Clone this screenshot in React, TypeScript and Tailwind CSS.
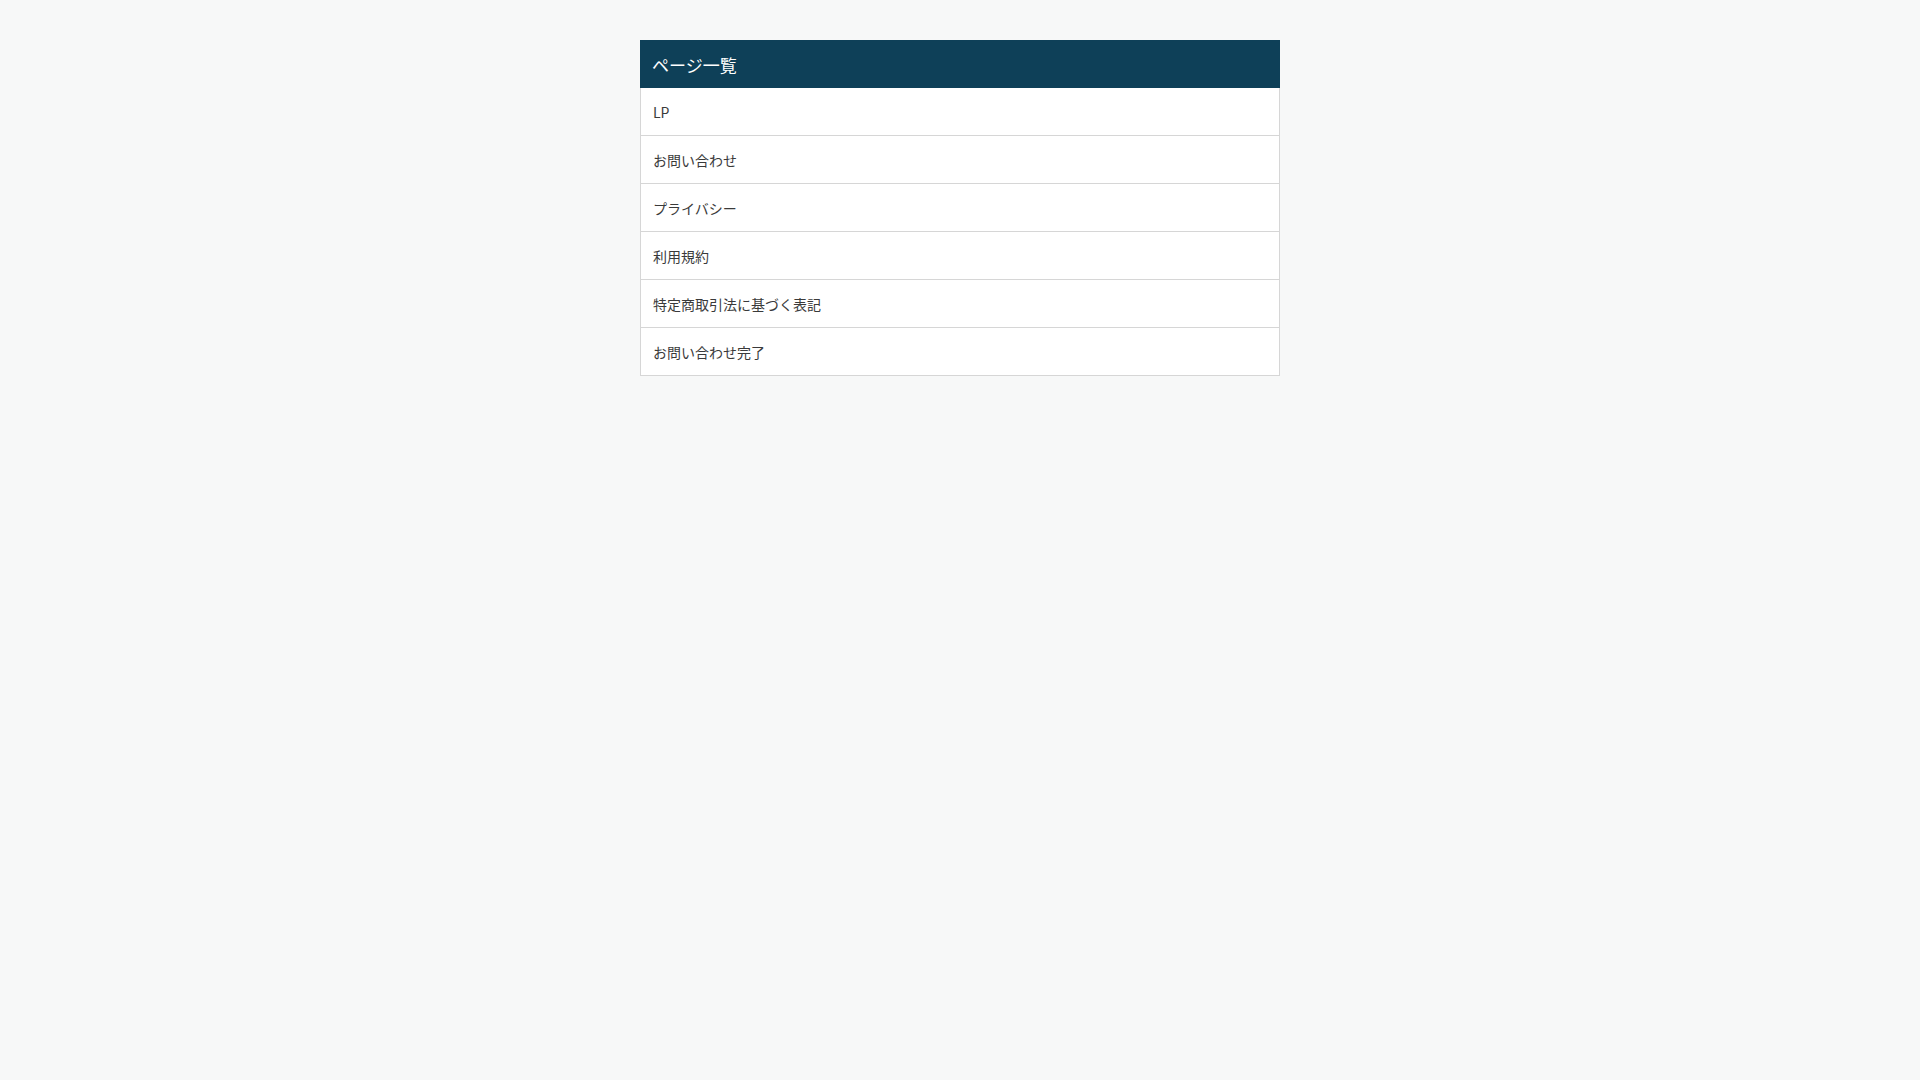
import * as React from 'react'

const pages = ['LP', 'お問い合わせ', 'プライバシー', '利用規約', '特定商取引法に基づく表記', 'お問い合わせ完了']

export default function App() {
  return (
    <div
      className="min-h-screen w-full bg-[#f7f8f8] pt-10"
      style={{ fontFamily: '"Noto Sans CJK JP", "Noto Sans", sans-serif' }}
    >
      <div className="mx-auto w-[640px]">
        <div className="flex h-12 items-center bg-[#0e4058] px-3 pt-[2px] text-[17px] text-white">
          ページ一覧
        </div>
        <ul className="border-x border-[#d6d6d6] bg-white">
          {pages.map((p) => (
            <li
              key={p}
              className="flex h-12 items-center border-b border-[#d6d6d6] px-3 pt-[2px] text-[14px] text-[#3a3a3a]"
            >
              {p}
            </li>
          ))}
        </ul>
      </div>
    </div>
  )
}
